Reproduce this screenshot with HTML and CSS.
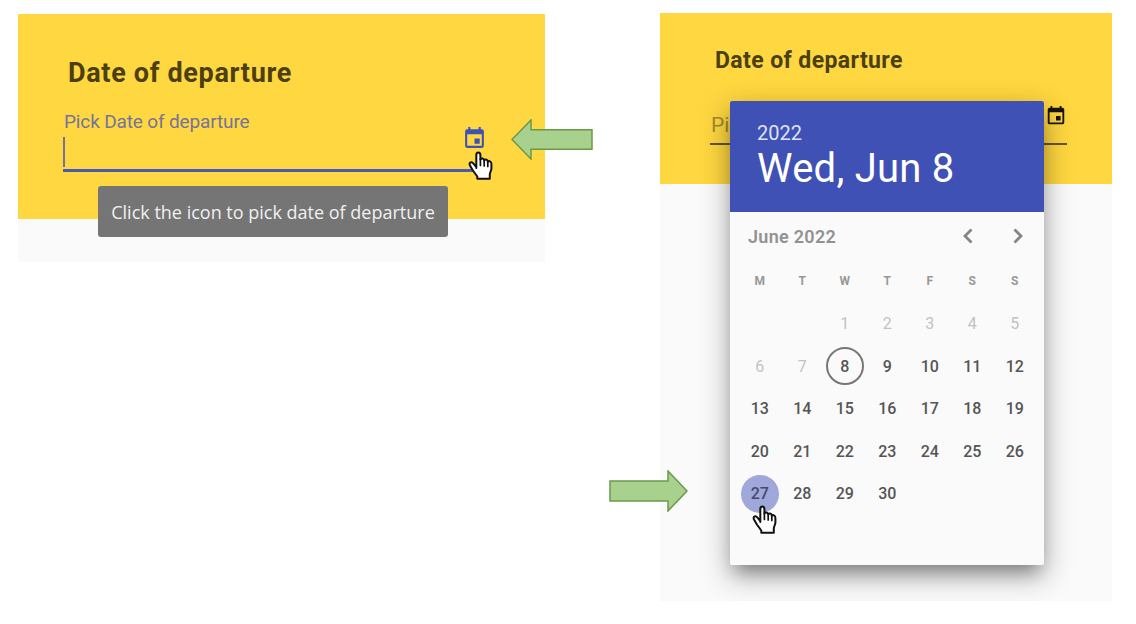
FILE: index.html
```html
<!DOCTYPE html>
<html lang="en">
<head>
<meta charset="utf-8">
<title>Date of departure</title>
<link rel="stylesheet" href="styles.css">
</head>
<body>
<svg class="defs" aria-hidden="true">
  <symbol id="event" viewBox="0 0 24 24"><path d="M17 12h-5v5h5v-5zM16 1v2H8V1H6v2H5c-1.100 0-2 .9-2 2v14c0 1.100.9 2 2 2h14c1.100 0 2-.9 2-2V5c0-1.100-.9-2-2-2h-1V1h-2zm3 18H5V8h14v11z"/></symbol>
  <symbol id="hand" viewBox="0 0 25 30"><path d="M8.300 17V4.200Q8.300 1.500 10.300 1.500Q12.400 1.500 12.400 4.200V8.600Q13.200 7.300 14.600 7.500Q16 7.800 16.200 9.300Q17.200 8.100 18.500 8.600Q19.700 9.100 19.800 10.700Q21 9.700 22.200 10.500Q23.400 11.200 23.400 13V18L21.800 23V27.800H9.300V25.500L4.900 19.500L2 14.500Q1 12.200 2.600 11.400Q4.200 10.800 5.500 12.700L8.300 16Z" fill="#fff" stroke="#111" stroke-width="2" stroke-linejoin="round"/><path d="M12.400 8v6.500M16.200 9v6M19.800 10.500v5" stroke="#111" stroke-width="1.700" stroke-linecap="round" fill="none"/></symbol>
</svg>
<main class="page">
  <section class="panel panel-left">
    <div class="banner">
      <h2 class="title">Date of departure</h2>
      <div class="field">
        <div class="field-main">
          <label class="label">Pick Date of departure</label>
          <span class="caret"></span>
        </div>
        <svg class="event"><use href="#event"/></svg>
      </div>
    </div>
    <div class="tooltip"><span>Click the icon to pick date of departure</span></div>
    <svg class="cursor"><use href="#hand"/></svg>
    <svg class="arrow" viewBox="0 0 82 41"><path d="M1 20.500 20 1V10.700H81V30.300H20V40Z"/></svg>
  </section>
  <section class="panel panel-right">
    <div class="clip">
      <div class="banner">
        <h2 class="title">Date of departure</h2>
        <div class="field">
          <span class="placeholder">Pick</span>
          <svg class="event"><use href="#event"/></svg>
        </div>
      </div>
      <div class="dialog">
        <header class="dialog-head">
          <div class="year">2022</div>
          <div class="date">Wed, Jun 8</div>
        </header>
        <div class="month">
          <span class="month-name">June 2022</span>
          <svg class="chevron" viewBox="0 0 12 18"><path d="M9.500 2.500 3 9l6.500 6.500"/></svg>
          <svg class="chevron next" viewBox="0 0 12 18"><path d="M2.500 2.500 9 9l-6.500 6.500"/></svg>
        </div>
        <div class="days">
          <b>M</b><b>T</b><b>W</b><b>T</b><b>F</b><b>S</b><b>S</b>
          <i></i><i></i><i>1</i><i>2</i><i>3</i><i>4</i><i>5</i>
          <i>6</i><i>7</i><span class="today">8</span><span>9</span><span>10</span><span>11</span><span>12</span>
          <span>13</span><span>14</span><span>15</span><span>16</span><span>17</span><span>18</span><span>19</span>
          <span>20</span><span>21</span><span>22</span><span>23</span><span>24</span><span>25</span><span>26</span>
          <span class="picked">27</span><span>28</span><span>29</span><span>30</span>
        </div>
        <svg class="cursor"><use href="#hand"/></svg>
      </div>
    </div>
    <svg class="arrow" viewBox="0 0 79 42"><path d="M1 11H59V1L78 21 59 41V31H1Z"/></svg>
  </section>
</main>
</body>
</html>
```

FILE: styles.css
```css
* { box-sizing: border-box; }
body { margin: 0; background: #fff; font-family: Roboto, "Liberation Sans", sans-serif; }
.defs { position: absolute; width: 0; height: 0; }
.page { display: flex; align-items: flex-start; gap: 115.500px; height: 624px; padding: 13px 0 0 18px; overflow: hidden; }
.panel { position: relative; background: #fafafa; }
.banner { background: #ffd740; }
.title { margin: 0; font-weight: 700; color: #4b4013; white-space: nowrap; }
.field { display: flex; justify-content: space-between; }
.arrow { position: absolute; fill: #a9d18e; stroke: #6a9a49; stroke-width: 1.500; }
.cursor { position: absolute; width: 25px; height: 30px; }

.panel-left { width: 526.500px; height: 248px; margin-top: 1px; }
.panel-left .banner { height: 205px; padding: 43px 58px 0 45px; }
.panel-left .title { padding-left: 5px; font-size: 27px; line-height: 32px; letter-spacing: .68px; }
.panel-left .field { height: 69px; margin-top: 14px; padding: 8px 0 0; border-bottom: 3px solid #4c59b0; }
.label { display: block; padding-left: 1px; font-size: 19px; line-height: 22px; letter-spacing: -.14px; color: #75739a; white-space: nowrap; }
.caret { display: block; width: 2px; height: 30px; margin-top: 4px; background: #75739a; }
.panel-left .event { width: 25px; height: 25px; margin: 15px 0 0; fill: #3f51b5; }
.tooltip { position: absolute; left: 80px; top: 172px; width: 350px; height: 51px; display: flex; align-items: center; justify-content: center; border-radius: 3px; background: #757575; color: #f0f0f0; font: 18px "Open Sans", "Noto Sans", sans-serif; white-space: nowrap; }
.panel-left .cursor { left: 450px; top: 136.500px; }
.panel-left .arrow { left: 493px; top: 105px; width: 82px; height: 41px; }

.panel-right { width: 451.500px; height: 588px; }
.clip { position: relative; height: 588px; overflow: hidden; }
.panel-right .banner { height: 171px; padding: 33px 44.500px 0 50px; }
.panel-right .title { padding-left: 5px; font-size: 23px; line-height: 30px; letter-spacing: .4px; }
.panel-right .field { height: 69px; border-bottom: 2px solid #665624; }
.placeholder { padding: 37px 0 0 1px; font-size: 21px; line-height: 24px; color: #a48b2e; }
.panel-right .event { width: 22px; height: 22px; margin: 29px 0 0; fill: #17140a; }
.dialog { position: absolute; left: 70px; top: 88px; width: 313.500px; height: 464px; background: #fafafa; border-radius: 2px; box-shadow: 0 12px 16px -7px rgba(0,0,0,.32), 0 10px 28px 2px rgba(0,0,0,.3); }
.dialog-head { height: 111px; padding: 20px 27px 0; border-radius: 2px 2px 0 0; background: #3f51b5; color: #fff; }
.year { font-size: 20px; line-height: 24px; color: #dfe2f2; }
.date { padding-top: 1px; font-size: 40px; line-height: 46px; letter-spacing: .25px; white-space: nowrap; }
.month { display: flex; align-items: center; height: 48px; padding: 0 19.500px 0 18px; }
.month-name { flex: 1; font-size: 18px; font-weight: 600; letter-spacing: .3px; color: #929292; }
.chevron { width: 12px; height: 18px; fill: none; stroke: #858585; stroke-width: 2.800; }
.next { margin-left: 38px; }
.days { display: grid; grid-template-columns: repeat(7, 42.500px); grid-auto-rows: 42.500px; padding-left: 8.500px; font-size: 16px; font-weight: 500; color: #555; }
.days > * { display: flex; align-items: center; justify-content: center; font-style: normal; }
.days b { font-size: 12px; font-weight: 700; color: #989898; }
.days i { font-weight: 400; color: #c2c2c2; }
.days .today, .days .picked { width: 38px; height: 38px; place-self: center; border-radius: 50%; }
.today { border: 2px solid #777; }
.picked { background: #9fa7db; color: #45496a; }
.dialog .cursor { left: 22px; top: 404px; }
.panel-right .arrow { left: -51.500px; top: 456.500px; width: 79px; height: 42px; }
```
